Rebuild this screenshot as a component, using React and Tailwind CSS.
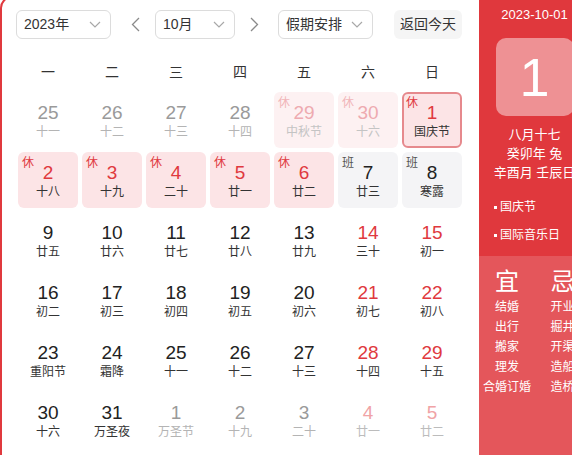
import React from "react";

const FONT = { fontFamily: '"Liberation Sans", Arial, "Noto Sans CJK SC", sans-serif' };

const rows = [
  [
    { d: 25, l: "十一", t: "prev" },
    { d: 26, l: "十二", t: "prev" },
    { d: 27, l: "十三", t: "prev" },
    { d: 28, l: "十四", t: "prev" },
    { d: 29, l: "中秋节", t: "prevHol" },
    { d: 30, l: "十六", t: "prevHol" },
    { d: 1, l: "国庆节", t: "sel" },
  ],
  [
    { d: 2, l: "十八", t: "hol" },
    { d: 3, l: "十九", t: "hol" },
    { d: 4, l: "二十", t: "hol" },
    { d: 5, l: "廿一", t: "hol" },
    { d: 6, l: "廿二", t: "hol" },
    { d: 7, l: "廿三", t: "work" },
    { d: 8, l: "寒露", t: "work" },
  ],
  [
    { d: 9, l: "廿五" },
    { d: 10, l: "廿六" },
    { d: 11, l: "廿七" },
    { d: 12, l: "廿八" },
    { d: 13, l: "廿九" },
    { d: 14, l: "三十", t: "wk" },
    { d: 15, l: "初一", t: "wk" },
  ],
  [
    { d: 16, l: "初二" },
    { d: 17, l: "初三" },
    { d: 18, l: "初四" },
    { d: 19, l: "初五" },
    { d: 20, l: "初六" },
    { d: 21, l: "初七", t: "wk" },
    { d: 22, l: "初八", t: "wk" },
  ],
  [
    { d: 23, l: "重阳节" },
    { d: 24, l: "霜降" },
    { d: 25, l: "十一" },
    { d: 26, l: "十二" },
    { d: 27, l: "十三" },
    { d: 28, l: "十四", t: "wk" },
    { d: 29, l: "十五", t: "wk" },
  ],
  [
    { d: 30, l: "十六" },
    { d: 31, l: "万圣夜" },
    { d: 1, l: "万圣节", t: "next" },
    { d: 2, l: "十九", t: "next" },
    { d: 3, l: "二十", t: "next" },
    { d: 4, l: "廿一", t: "nextWk" },
    { d: 5, l: "廿二", t: "nextWk" },
  ],
];

function Chevron() {
  return (
    <svg width="12" height="7" viewBox="0 0 12 7" fill="none">
      <path d="M1 1 L6 6 L11 1" stroke="#a8a8a8" strokeWidth="1.2" />
    </svg>
  );
}

function Select({ label, w }) {
  return (
    <div
      className={`${w} h-[29px] border border-[#dcdcdc] rounded-[6px] flex items-center justify-between pl-[7px] pr-[9px] text-[14px] text-[#333]`}
    >
      <span>{label}</span>
      <Chevron />
    </div>
  );
}

function Cell({ c }) {
  const t = c.t || "norm";
  let box = "";
  let num = "text-[#222]";
  let lun = "text-[#333]";
  let badge = null;
  if (t === "prev" || t === "next") {
    num = "text-[#9a9a9a]";
    lun = "text-[#b4b4b4]";
  } else if (t === "nextWk") {
    num = "text-[#f0a3a6]";
    lun = "text-[#bcbcbc]";
  } else if (t === "prevHol") {
    box = "bg-[#fdf1f2]";
    num = "text-[#eeaab0]";
    lun = "text-[#c4c4c4]";
    badge = <span className="absolute left-[4px] top-[3px] text-[12px] leading-[16px] text-[#f1b5b9]">休</span>;
  } else if (t === "hol") {
    box = "bg-[#fce4e6]";
    num = "text-[#e0393e]";
    badge = <span className="absolute left-[4px] top-[3px] text-[12px] leading-[16px] text-[#e0393e]">休</span>;
  } else if (t === "sel") {
    box = "bg-[#fce4e6] border-2 border-[#e6898d]";
    num = "text-[#e0393e]";
    badge = <span className="absolute left-[2px] top-[1px] text-[12px] leading-[16px] text-[#e0393e]">休</span>;
  } else if (t === "work") {
    box = "bg-[#f4f4f6]";
    badge = <span className="absolute left-[4px] top-[3px] text-[12px] leading-[16px] text-[#555]">班</span>;
  } else if (t === "wk") {
    num = "text-[#e0393e]";
  }
  const sel = t === "sel";
  return (
    <div className={`relative h-[56px] w-[60px] rounded-[6px] flex flex-col items-center ${box}`}>
      {badge}
      <div className={`${sel ? "pt-[8px]" : "pt-[10px]"} text-[19px] leading-[22px] ${num}`}>{c.d}</div>
      <div className={`text-[12px] leading-[16px] ${lun}`}>{c.l}</div>
    </div>
  );
}

export default function App() {
  return (
    <div className="w-[572px] h-[455px] overflow-hidden bg-white" style={FONT}>
      <div className="flex w-[592px] h-[480px] -mt-[4px] border-2 border-[#e0393e] rounded-tl-[12px] overflow-hidden bg-white">
        <div className="w-[477px] shrink-0 pl-[14px]">
          <div className="mt-[12px] flex items-center h-[29px]">
            <Select label="2023年" w="w-[95px]" />
            <div className="w-[44px] flex justify-center pl-[4px]">
              <svg width="9" height="15" viewBox="0 0 9 15" fill="none">
                <path d="M8 1 L1.5 7.5 L8 14" stroke="#8a8a8a" strokeWidth="1.3" />
              </svg>
            </div>
            <Select label="10月" w="w-[80px]" />
            <div className="w-[43px] flex justify-center pr-[4px]">
              <svg width="9" height="15" viewBox="0 0 9 15" fill="none">
                <path d="M1 1 L7.5 7.5 L1 14" stroke="#8a8a8a" strokeWidth="1.3" />
              </svg>
            </div>
            <Select label="假期安排" w="w-[95px]" />
            <div className="ml-[21px] w-[68px] h-[29px] rounded-[6px] bg-[#f5f5f5] flex items-center justify-center text-[14px] text-[#333]">
              返回今天
            </div>
          </div>
          <div className="pl-[2px]">
            <div className="mt-[23px] grid grid-cols-[repeat(7,60px)] gap-x-[4px] h-[20px] text-[14px] leading-[20px] text-[#333]">
              {["一", "二", "三", "四", "五", "六", "日"].map((w) => (
                <div key={w} className="text-center">{w}</div>
              ))}
            </div>
            <div className="mt-[10px] grid grid-cols-[repeat(7,60px)] gap-x-[4px] gap-y-[4px]">
              {rows.flat().map((c, i) => (
                <Cell key={i} c={c} />
              ))}
            </div>
          </div>
        </div>
        <div className="w-[111px] shrink-0 flex flex-col bg-[#e0383d] text-white">
          <div className="pt-[8px] text-[13px] leading-[18px] text-center">2023-10-01</div>
          <div className="mt-[14px] mx-auto w-[78px] h-[78px] rounded-[10px] bg-white/45 flex items-center justify-center text-[54px] leading-none">
            1
          </div>
          <div className="mt-[9px] text-[13px] leading-[19px] text-center">
            <div>八月十七</div>
            <div>癸卯年 兔</div>
            <div>辛酉月 壬辰日</div>
          </div>
          <div className="mt-[11px] pl-[15px] text-[12px] leading-[28px]">
            <div className="flex items-center">
              <span className="w-[3px] h-[3px] bg-white mr-[3px]"></span>国庆节
            </div>
            <div className="flex items-center">
              <span className="w-[3px] h-[3px] bg-white mr-[3px]"></span>国际音乐日
            </div>
          </div>
          <div className="mt-[7px] flex-1 bg-[#e4565b] flex pt-[11px]">
            <div className="w-[56px] flex flex-col items-center">
              <div className="text-[24px] leading-[30px]">宜</div>
              {["结婚", "出行", "搬家", "理发", "合婚订婚"].map((s) => (
                <div key={s} className="text-[12px] leading-[20px] whitespace-nowrap">{s}</div>
              ))}
            </div>
            <div className="w-[55px] flex flex-col items-center">
              <div className="text-[24px] leading-[30px]">忌</div>
              {["开业", "掘井", "开渠", "造船", "造桥"].map((s) => (
                <div key={s} className="text-[12px] leading-[20px] whitespace-nowrap">{s}</div>
              ))}
            </div>
          </div>
        </div>
      </div>
    </div>
  );
}
